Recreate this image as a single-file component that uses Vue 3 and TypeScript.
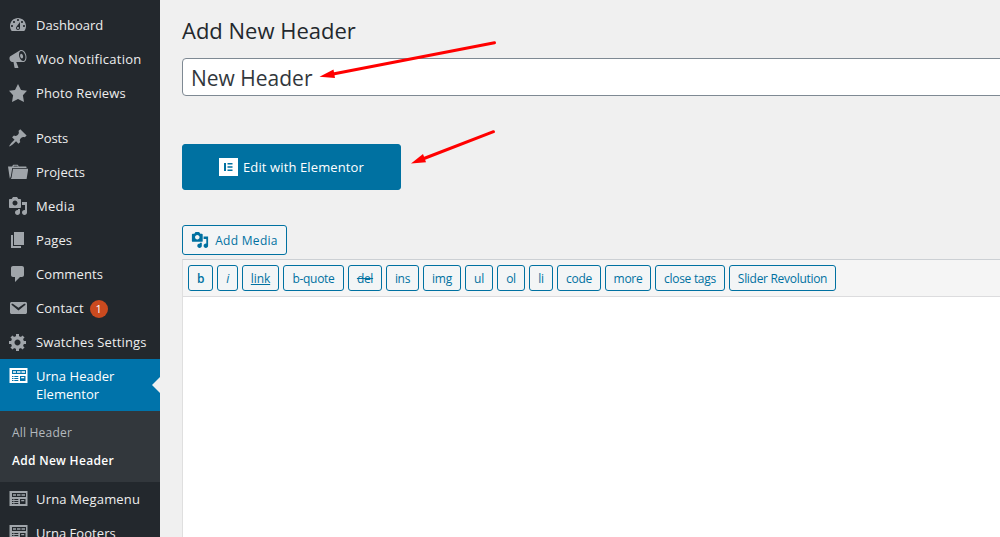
<script setup lang="ts">
interface MenuItem {
  label: string
  icon: string
  spacing: number
  badge?: string
  gapBefore?: boolean
  active?: boolean
  children?: { label: string; current?: boolean }[]
}

const icons: Record<string, string> = {
  dashboard:
    'M3.76 16h12.48c1.1-1.37 1.76-3.11 1.76-5 0-4.42-3.58-8-8-8s-8 3.58-8 8c0 1.89.66 3.63 1.76 5zM10 4c.55 0 1 .45 1 1s-.45 1-1 1-1-.45-1-1 .45-1 1-1zM6 6c.55 0 1 .45 1 1s-.45 1-1 1-1-.45-1-1 .45-1 1-1zm8 0c.55 0 1 .45 1 1s-.45 1-1 1-1-.45-1-1 .45-1 1-1zm-5.37 5.55L12 7v6c0 1.1-.9 2-2 2s-2-.9-2-2c0-.57.24-1.08.63-1.45zM4 10c.55 0 1 .45 1 1s-.45 1-1 1-1-.45-1-1 .45-1 1-1zm12 0c.55 0 1 .45 1 1s-.45 1-1 1-1-.45-1-1 .45-1 1-1zm-5 3c0-.55-.45-1-1-1s-1 .45-1 1 .45 1 1 1 1-.45 1-1z',
  megaphone:
    'M18.15 5.94c.46 1.62.38 3.22-.02 4.48-.42 1.28-1.26 2.18-2.3 2.48-.16.06-.26.06-.4.06-.06.02-.12.02-.18.02-.06.02-.14.02-.22.02h-6.8l2.22 5.5c.02.14-.06.26-.14.34-.08.1-.24.16-.34.16H6.95c-.1 0-.26-.06-.34-.16-.08-.08-.16-.2-.14-.34l-1-5.5H4.25l-.02-.02c-.5.06-1.08-.18-1.54-.62s-.88-1.08-1.06-1.88c-.24-.8-.2-1.56-.02-2.2.18-.62.58-1.08 1.06-1.3l.02-.02 9-5.4c.1-.06.18-.1.24-.16.06-.04.14-.08.24-.12.16-.08.28-.12.5-.18 1.04-.3 2.24.1 3.22.98s1.84 2.24 2.26 3.86zm-2.58 5.98h-.02c.4-.1.74-.34 1.04-.7.58-.7.86-1.76.86-3.04 0-.64-.1-1.3-.28-1.98-.34-1.36-1.02-2.5-1.78-3.24s-1.68-1.1-2.46-.88c-.82.22-1.4.96-1.7 2-.32 1.04-.28 2.36.06 3.72.38 1.36 1 2.5 1.8 3.24.78.74 1.62 1.1 2.48.88zm-2.54-7.08c.22-.04.42-.02.62.04.38.16.76.48 1.02 1s.42 1.2.42 1.78c0 .3-.04.56-.12.8-.18.48-.44.84-.86.94-.34.1-.8-.06-1.14-.4s-.64-.86-.78-1.5c-.18-.62-.12-1.24.02-1.72s.48-.84.82-.94z',
  star: 'M10 1l3 6 6 .75-4.12 4.62L16 19l-6-3-6 3 1.13-6.63L1 7.75 7 7z',
  pin: 'M10.44 3.02l1.82-1.82 6.36 6.35-1.83 1.82c-1.05-.68-2.48-.57-3.41.36l-.75.75c-.92.93-1.04 2.35-.35 3.41l-1.83 1.82-2.41-2.41-2.8 2.79c-.42.42-3.38 2.71-3.8 2.29s1.86-3.39 2.28-3.81l2.79-2.79L4.1 9.36l1.83-1.82c1.05.69 2.48.57 3.4-.36l.75-.75c.93-.92 1.05-2.35.36-3.41z',
  folder:
    'M0 4.500h4.200l.6-1.300c.1-.2.300-.4.600-.4h4.200c.3 0 .5.200.6.400l.4 1.300h7.400c.3 0 .5.200.5.500V6H4.300L2.800 14.500 1.800 16.500zM5.500 4.500h4.300l-.4-.8H5.900zM5 6.800h15.300l-1.700 10.200H2.600c.6-.5.900-1.200 1-1.800z',
  media:
    'M13 11V4c0-.55-.45-1-1-1h-1.67L9 1H5L3.67 3H2c-.55 0-1 .45-1 1v7c0 .55.45 1 1 1h10c.55 0 1-.45 1-1zM7 4.5c1.38 0 2.5 1.12 2.5 2.5S8.38 9.5 7 9.5 4.5 8.38 4.5 7 5.62 4.5 7 4.5zM14 6h5v10.5c0 1.38-1.12 2.5-2.5 2.5S14 17.88 14 16.5s1.12-2.5 2.5-2.5c.17 0 .34.02.5.05V9h-3V6zm-4 8.05V13h2v3.5c0 1.38-1.12 2.5-2.5 2.5S7 17.88 7 16.5 8.12 14 9.5 14c.17 0 .34.02.5.05z',
  pages: 'M6 15V2h10v13H6zm-1 1h8v2H3V5h2v11z',
  comment: 'M5 2h9c1.1 0 2 .9 2 2v7c0 1.1-.9 2-2 2h-2l-5 5v-5H5c-1.1 0-2-.9-2-2V4c0-1.1.9-2 2-2z',
  email:
    'M3.87 4h13.25C18.37 4 19 4.59 19 5.79v8.42c0 1.19-.63 1.79-1.88 1.79H3.87c-1.25 0-1.88-.6-1.88-1.79V5.79c0-1.2.63-1.79 1.88-1.79zm6.62 8.6l6.74-5.53c.24-.2.43-.66.13-1.07-.29-.41-.82-.42-1.17-.17l-5.7 3.86L4.8 5.83c-.35-.25-.88-.24-1.17.17-.3.41-.11.87.13 1.07z',
  gear: 'M18 12h-2.18c-.17.7-.44 1.35-.81 1.93l1.54 1.54-2.1 2.1-1.54-1.54c-.58.36-1.23.63-1.91.79V19H8v-2.18c-.68-.16-1.33-.43-1.91-.79l-1.54 1.54-2.12-2.12 1.54-1.54c-.36-.58-.63-1.23-.79-1.91H1V9.03h2.17c.16-.7.44-1.35.8-1.94L2.43 5.55l2.1-2.1 1.54 1.54c.58-.37 1.24-.64 1.93-.81V2h3v2.18c.68.16 1.33.43 1.91.79l1.54-1.54 2.12 2.12-1.54 1.54c.36.59.64 1.24.8 1.94H18V12zm-8.5 1.5c1.66 0 3-1.34 3-3s-1.34-3-3-3-3 1.34-3 3 1.34 3 3 3z',
  layout:
    'M1.500 2H19.500V17H1.500zM4 4V8H18V4zM5 5.200h3v1.600H5zM9 5.200h3.500v1.600H9zM13.500 5.200h3.500v1.600h-3.500zM4 10v1h1.500v-1zM6.300 10v1h4v-1zM4 12v1h1.500v-1zM6.300 12v1h4v-1zM4 14v1h1.500v-1zM6.300 14v1h4v-1zM12 10v5h5.500v-5zM13.200 11h3v1.200h-3z',
}

const menu: MenuItem[] = [
  { label: 'Dashboard', icon: 'dashboard', spacing: 0.03 },
  { label: 'Woo Notification', icon: 'megaphone', spacing: 0.26 },
  { label: 'Photo Reviews', icon: 'star', spacing: 0.13 },
  { label: 'Posts', icon: 'pin', spacing: -0.1, gapBefore: true },
  { label: 'Projects', icon: 'folder', spacing: 0.05 },
  { label: 'Media', icon: 'media', spacing: 0.3 },
  { label: 'Pages', icon: 'pages', spacing: 0.1 },
  { label: 'Comments', icon: 'comment', spacing: 0.1 },
  { label: 'Contact', icon: 'email', spacing: 0.15, badge: '1' },
  { label: 'Swatches Settings', icon: 'gear', spacing: 0.13 },
  {
    label: 'Urna Header Elementor',
    icon: 'layout',
    spacing: 0.03,
    active: true,
    children: [{ label: 'All Header' }, { label: 'Add New Header', current: true }],
  },
  { label: 'Urna Megamenu', icon: 'layout', spacing: 0.17 },
  { label: 'Urna Footers', icon: 'layout', spacing: 0.05 },
]

const quicktags: { label: string; width: number; kind?: string }[] = [
  { label: 'b', width: 25, kind: 'bold' },
  { label: 'i', width: 21, kind: 'italic' },
  { label: 'link', width: 37, kind: 'underline' },
  { label: 'b-quote', width: 61 },
  { label: 'del', width: 34, kind: 'strike' },
  { label: 'ins', width: 33 },
  { label: 'img', width: 38 },
  { label: 'ul', width: 28 },
  { label: 'ol', width: 28 },
  { label: 'li', width: 24 },
  { label: 'code', width: 44 },
  { label: 'more', width: 46 },
  { label: 'close tags', width: 70 },
  { label: 'Slider Revolution', width: 107 },
]
</script>

<template>
  <div class="screen">
    <nav class="sidebar">
      <template v-for="item in menu" :key="item.label">
        <a class="item" :class="{ active: item.active, spaced: item.gapBefore }">
          <svg class="icon" viewBox="0 0 20 20"><path fill-rule="evenodd" :d="icons[item.icon]" /></svg>
          <span class="label" :style="{ letterSpacing: item.spacing + 'px' }">{{ item.label }}</span>
          <span v-if="item.badge" class="badge">{{ item.badge }}</span>
        </a>
        <div v-if="item.children" class="submenu">
          <a v-for="c in item.children" :key="c.label" :class="{ current: c.current }">{{ c.label }}</a>
        </div>
      </template>
    </nav>

    <main class="content">
      <h1>Add New Header</h1>
      <div class="title-field"><span>New Header</span></div>
      <button class="elementor">
        <svg class="logo" viewBox="0 0 19 18">
          <rect width="19" height="18" fill="#fff" />
          <path d="M5 5h2v8H5zM8.500 5h5v1.600h-5zM8.500 8.200h5v1.600h-5zM8.500 11.400h5V13h-5z" fill="#0071a1" />
        </svg>
        <span>Edit with Elementor</span>
      </button>
      <button class="add-media">
        <svg viewBox="0 0 20 20"><path fill-rule="evenodd" :d="icons.media" /></svg>
        <span>Add Media</span>
      </button>
      <section class="editor">
        <div class="toolbar">
          <button v-for="q in quicktags" :key="q.label" :class="q.kind" :style="{ width: q.width + 'px' }">
            {{ q.label }}
          </button>
        </div>
        <div class="text-area"></div>
      </section>
    </main>

    <svg class="arrows" viewBox="0 0 1000 537">
      <g stroke="#f00" stroke-width="3" stroke-linecap="round">
        <path d="M494.500 42.800L333 74" />
        <path d="M493.500 131.700L424 158.500" />
      </g>
      <path d="M319.500 76.800L333.500 69.500L335 78Z" fill="#f00" />
      <path d="M411 163.500L423 154L426 162.200Z" fill="#f00" />
    </svg>
  </div>
</template>

<style>
body {
  margin: 0;
  overflow: hidden;
  background: #f0f0f0;
}
</style>

<style scoped>
.screen {
  position: relative;
  display: flex;
  width: 1000px;
  height: 537px;
  overflow: hidden;
  font-family: 'Open Sans', 'Noto Sans', sans-serif;
  font-size: 13px;
}
.sidebar {
  flex: none;
  box-sizing: border-box;
  width: 160px;
  padding-top: 8px;
  background: #23282d;
}
.item {
  position: relative;
  display: flex;
  align-items: flex-start;
  box-sizing: border-box;
  min-height: 34px;
  padding: 8px 0 8px 8px;
  color: #eee;
  line-height: 18px;
}
.item.spaced {
  margin-top: 11px;
}
.item.active {
  background: #0073aa;
  color: #fff;
}
.item.active::after {
  content: '';
  position: absolute;
  right: 0;
  top: 18px;
  border: 8px solid transparent;
  border-left: 0;
  border-right-color: #f0f0f0;
}
.item.active .label {
  width: 90px;
}
.icon {
  flex: none;
  width: 20px;
  height: 20px;
  margin: -1px 8px -1px 0;
  fill: #a0a5aa;
}
.active .icon {
  fill: #fff;
}
.badge {
  width: 18px;
  height: 18px;
  margin: 1px 0 -1px 6px;
  border-radius: 9px;
  background: #ca4a1f;
  color: #fff;
  font-size: 11px;
  text-align: center;
}
.submenu {
  box-sizing: border-box;
  height: 71px;
  padding: 7px 12px;
  background: #32373c;
  color: #b4b9be;
  font-size: 12px;
  letter-spacing: 0.2px;
}
.submenu a {
  display: block;
  height: 28px;
  line-height: 29px;
}
.submenu .current {
  color: #fff;
  font-weight: 600;
  letter-spacing: 0.3px;
}
.content {
  flex: 1;
  display: flex;
  flex-direction: column;
  align-items: flex-start;
  min-width: 0;
  padding: 15px 0 0 22px;
}
h1 {
  margin: 0;
  height: 43px;
  color: #23282d;
  font-size: 22px;
  font-weight: 400;
  line-height: 31px;
}
.title-field {
  align-self: stretch;
  box-sizing: border-box;
  height: 38px;
  margin-right: -10px;
  padding-left: 8px;
  border: 1px solid #7e8993;
  border-radius: 4px;
  background: #fff;
  color: #32373c;
  font-size: 21px;
  line-height: 38px;
}
button {
  box-sizing: border-box;
  display: flex;
  align-items: center;
  justify-content: center;
  padding: 0;
  border: 1px solid #0071a1;
  border-radius: 3px;
  background: #f3f5f6;
  color: #0071a1;
  font-family: inherit;
  white-space: nowrap;
}
.elementor {
  width: 219px;
  height: 46px;
  margin-top: 48px;
  gap: 5px;
  background: #0071a1;
  color: #fff;
  font-size: 13px;
  letter-spacing: 0.12px;
}
.logo {
  width: 19px;
  height: 18px;
}
.add-media {
  width: 105px;
  height: 30px;
  margin-top: 35px;
  gap: 6px;
  font-size: 12px;
  letter-spacing: 0.3px;
}
.add-media svg {
  width: 18px;
  height: 18px;
  fill: #0071a1;
}
.editor {
  align-self: stretch;
  flex: 1;
  display: flex;
  flex-direction: column;
  margin-top: 4px;
  border: 1px solid #ccd0d4;
  border-left-color: #dfdfdf;
  border-right: 0;
  border-bottom: 0;
}
.toolbar {
  display: flex;
  gap: 4px;
  box-sizing: border-box;
  height: 37px;
  padding: 5px;
  border-bottom: 1px solid #dcdcde;
  background: #f5f5f5;
}
.toolbar button {
  height: 26px;
  font-size: 12px;
  letter-spacing: -0.3px;
}
.toolbar .bold {
  font-weight: 600;
}
.toolbar .italic {
  font-style: italic;
}
.toolbar .underline {
  text-decoration: underline;
  letter-spacing: -0.1px;
}
.toolbar .strike {
  text-decoration: line-through;
}
.text-area {
  flex: 1;
  background: #fff;
}
.arrows {
  position: absolute;
  inset: 0;
  width: 1000px;
  height: 537px;
  pointer-events: none;
}
</style>
